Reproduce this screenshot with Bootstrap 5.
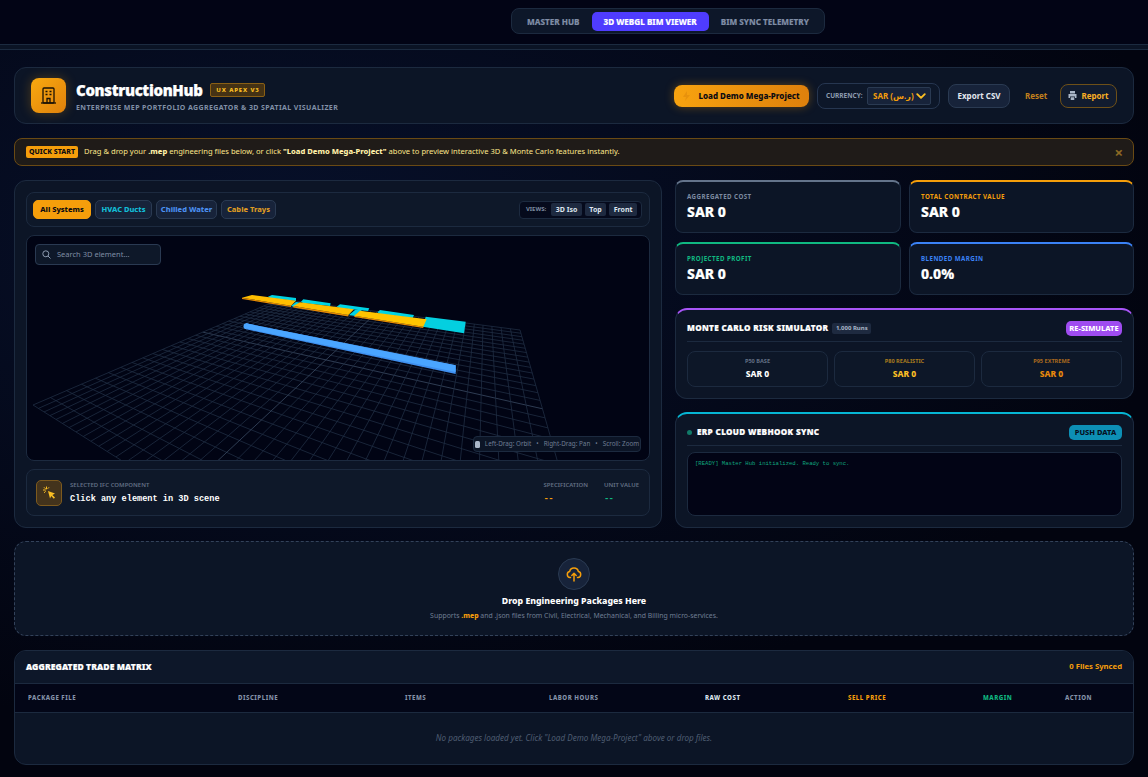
<!DOCTYPE html>
<html lang="en">

<head>
  <meta charset="UTF-8" />
  <meta name="viewport" content="width=device-width, initial-scale=1" />
  <title>ConstructionHub</title>
  <link href="https://cdn.jsdelivr.net/npm/bootstrap@5.3.2/dist/css/bootstrap.min.css" rel="stylesheet">
  <style>
    body {
      background: radial-gradient(ellipse 900px 500px at 25% 30%, #07102a 0%, rgba(7, 16, 42, 0) 100%), #02040f;
      color: #fff;
      font-family: "Noto Sans", "DejaVu Sans", sans-serif;
      font-size: 9px;
      min-height: 777px;
    }

    .mono-txt { font-family: "Liberation Mono", monospace; }

    .top-strip { height: 44px; background: #020415; padding-left: 188px; }
    .tab-shell { background: #0d1729; border: 1px solid #1c2a3f; border-radius: 8px; padding: 3px; height: 26px; gap: 0; }
    .tab-shell .nav-link { color: #7f8da5; font-size: 8.1px; font-weight: 800; padding: 0 12px; height: 19px; line-height: 19px; border-radius: 5px; white-space: nowrap; -webkit-text-stroke: .15px; }
    .tab-shell .nav-link.active { background: #4f3cff; color: #fff; }
    .strip-band { height: 6px; background: #0b1425; border-top: 1px solid #1c2b40; border-bottom: 1px solid #1c2b40; }

    .hub-page { padding: 17px 14px 12px; gap: 14px; }
    .hub-panel { background: #0c1526; border: 1px solid #1c2a3f; border-radius: 12px; color: #fff; }

    .hub-head { height: 57px; padding: 0 16px; flex-direction: row; align-items: center; }
    .logo-box { width: 35px; height: 35px; border-radius: 8px; background: linear-gradient(135deg, #f9a90f, #df810c); box-shadow: 0 0 12px rgba(245, 158, 11, .28); margin-right: 10px; }
    .brand-txt { padding-top: 2px; }
    .brand-name { font-size: 15px; font-weight: 900; letter-spacing: -.35px; line-height: 19px; -webkit-text-stroke: .25px #fff; }
    .brand-tag { background: #453214; border: 1px solid #8a5f14; color: #fbbf24; border-radius: 2px; font-size: 6px; font-weight: 800; letter-spacing: .85px; width: 55px; text-align: center; height: 14px; line-height: 12px; white-space: nowrap; margin-left: 4px; }
    .brand-sub { color: #8190a6; font-size: 7px; font-weight: 700; letter-spacing: .4px; margin-top: 3px; line-height: 10px; }

    .btn-demo { background: linear-gradient(90deg, #f8a30f, #de800c); color: #0a0a12; border: 0; border-radius: 8px; font-size: 8px; font-weight: 800; height: 22px; width: 135px; padding: 0; box-shadow: 0 0 10px rgba(245, 158, 11, .35); }
    .cur-box { border: 1px solid #263650; border-radius: 8px; height: 26px; width: 123px; padding: 0 8px; background: #0d1729; }
    .cur-box label { color: #8d9bb0; font-size: 6.5px; font-weight: 700; }
    .cur-box .form-select { width: 64px; height: 18px; min-height: 0; background-color: #17233a; border: 1px solid #2a3a52; border-radius: 2px; color: #f59e0b; font-size: 8px; font-weight: 700; padding: 0 0 0 5px; background-position: right 4px center; background-size: 10px 10px; background-image: url("data:image/svg+xml,%3csvg xmlns='http://www.w3.org/2000/svg' viewBox='0 0 16 16'%3e%3cpath fill='none' stroke='%23fbbf24' stroke-linecap='round' stroke-linejoin='round' stroke-width='3' d='m2 5 6 6 6-6'/%3e%3c/svg%3e"); }
    .btn-ghost { background: #17233a; border: 1px solid #2a3a52; border-radius: 8px; color: #e2e8f0; font-size: 8px; font-weight: 700; height: 24px; width: 62px; padding: 0; }
    .btn-reset { color: #c4801c; font-size: 8px; font-weight: 700; padding: 0; border: 0; width: 21px; white-space: nowrap; margin-left: 15px; }
    .btn-report { background: #121c2f; border: 1px solid #6e5018; border-radius: 8px; color: #fbb024; font-size: 8px; font-weight: 700; height: 24px; width: 57px; padding: 0; margin-left: 14px; }

    .hub-alert { background: #1f1b18; border: 1px solid #6a4a14; border-radius: 8px; height: 28px; padding: 0 10px 0 11px; margin: 0; color: #fde68a; font-size: 7.6px; }
    .qs-tag { background: #f59e0b; color: #0b0b12; border-radius: 2px; font-size: 7px; font-weight: 800; height: 12px; line-height: 12px; width: 52px; text-align: center; white-space: nowrap; margin-right: 6px; }
    .hub-alert b { font-weight: 800; color: #fff0a8; }
    .hub-alert .x-close { color: #8d6a24; font-size: 15px; font-weight: 700; line-height: 1; }

    .hub-main { display: grid; grid-template-columns: 648px 459px; gap: 13px; height: 347px; }
    .left-panel { padding: 11px; gap: 8px; }
    .inner-bar { background: #0e1829; border: 1px solid #1c2a3f; border-radius: 8px; }
    .tool-bar { height: 35px; padding: 0 7px 0 6px; }
    .flt-btn { height: 19px; background: #17233a; border: 1px solid #2a3a52; border-radius: 5px; font-size: 7.5px; font-weight: 800; padding: 0; text-align: center; }
    .flt-all { background: #f59e0b; border-color: #f59e0b; color: #0b0b12; width: 58px; }
    .flt-duct { color: #12bdd6; width: 57px; }
    .flt-water { color: #4b8ff0; width: 61px; }
    .flt-tray { color: #dd9a24; width: 55px; }
    .view-box { background: #050a1c; border: 1px solid #1c2a3f; border-radius: 4px; height: 18px; padding: 0 4px; gap: 3px; }
    .view-box span { color: #7c8aa0; font-size: 6px; font-weight: 700; margin: 0 2px; }
    .view-btn { background: #1e2a40; color: #dfe6f0; font-size: 7px; font-weight: 700; border: 0; border-radius: 2px; height: 13px; padding: 0 4.5px; line-height: 13px; }

    .scene-box { height: 226px; background: #010414; border: 1px solid #1c2a3f; border-radius: 8px; overflow: hidden; }
    #scene { position: absolute; inset: 0; width: 100%; height: 100%; }
    .scene-find { position: absolute; left: 8px; top: 8px; width: 126px; height: 21px; background: #0e1829; border: 1px solid #2a3a52; border-radius: 4px; color: #7f8da3; font-size: 7.5px; padding-left: 6px; gap: 6px; }
    .scene-hint { position: absolute; right: 8px; bottom: 8px; width: 168px; height: 16px; background: #0c1526; border: 1px solid #1c2a3f; border-radius: 4px; color: #6f7d93; font-size: 6.3px; gap: 5px; justify-content: center; white-space: nowrap; }

    .pick-bar { height: 47px; padding: 0 10px 0 9px; }
    .pick-icon { width: 26px; height: 26px; background: #43331c; border: 1px solid #7d5a1e; border-radius: 5px; }
    .tiny-lbl { color: #626f84; font-size: 6px; font-weight: 600; line-height: 9px; white-space: nowrap; }
    .pick-main { font-size: 8.6px; font-weight: 700; line-height: 12px; margin-top: 3px; }
    .pick-dash { font-size: 9px; font-weight: 700; line-height: 12px; margin-top: 3px; letter-spacing: -.8px; }

    .right-col { gap: 13px; }
    .stat-grid { display: grid; grid-template-columns: 226px 225px; gap: 9px 8px; }
    .stat-box { height: 53px; padding: 10px 11px 0; border-top-width: 2px; border-radius: 8px; }
    .stat-lbl { font-size: 6.2px; font-weight: 700; letter-spacing: .45px; line-height: 9px; white-space: nowrap; }
    .stat-val { font-size: 14px; font-weight: 800; line-height: 17px; margin-top: 2px; -webkit-text-stroke: .2px #fff; }
    .top-slate { border-top-color: #64748b; } .top-amber { border-top-color: #f59e0b; } .top-green { border-top-color: #10b981; } .top-blue { border-top-color: #3b82f6; } .top-violet { border-top-color: #a855f7; } .top-cyan { border-top-color: #06b6d4; }
    .c-slate { color: #7c8aa0; } .c-amber { color: #f59e0b; } .c-green { color: #10b981; } .c-blue { color: #3b82f6; }

    .sim-box { height: 91px; padding: 11px 11px 0; border-top-width: 2px; }
    .sim-head { height: 21px; border-bottom: 1px solid #1c2a3f; padding-bottom: 5px; }
    .sec-title { font-size: 8.1px; font-weight: 900; letter-spacing: .35px; white-space: nowrap; -webkit-text-stroke: .2px #fff; }
    .runs-tag { background: #1e2a40; color: #aab6c8; font-size: 6px; font-weight: 700; border-radius: 2px; height: 11px; line-height: 11px; width: 39px; text-align: center; margin-left: 4px; white-space: nowrap; }
    .btn-sim { background: #9f4cf0; color: #fff; border: 0; border-radius: 5px; font-size: 7.5px; font-weight: 800; width: 56px; height: 15px; padding: 0; line-height: 15px; white-space: nowrap; }
    .sim-cells { display: grid; grid-template-columns: repeat(3, 141px); gap: 6px; margin-top: 9px; }
    .sim-cell { height: 36px; background: #0d1728; border: 1px solid #1c2a3f; border-radius: 8px; padding-top: 5px; text-align: center; }
    .sim-cell .tiny-lbl { font-size: 5.6px; font-weight: 700; }
    .sim-cell div + div { font-size: 8.5px; font-weight: 800; line-height: 12px; margin-top: 2px; }

    .erp-box { padding: 11px 11px 0; border-top-width: 2px; flex-grow: 1; }
    .erp-dot { width: 5px; height: 5px; border-radius: 50%; background: #117a68; margin-right: 5px; }
    .btn-push { background: #0d8fb5; color: #06101f; border: 0; border-radius: 5px; font-size: 7.5px; font-weight: 800; width: 53px; height: 15px; padding: 0; line-height: 15px; white-space: nowrap; }
    .erp-log { height: 64px; margin-top: 6px; background: #020415; border: 1px solid #1c2a3f; border-radius: 8px; padding: 6px 7px; color: #10a67f; font-size: 5.6px; line-height: 9px; }

    .drop-zone { height: 95px; background: #0c1526; border: 1px dashed #33425a; border-radius: 12px; padding-top: 15px; text-align: center; }
    .drop-ring { width: 32px; height: 32px; border-radius: 50%; background: #17233a; border: 1px solid #2a3a52; }
    .drop-title { font-size: 8.75px; font-weight: 800; line-height: 12px; margin-top: 5px; }
    .drop-sub { color: #6f7d93; font-size: 6.9px; line-height: 10px; margin-top: 4px; }
    .drop-sub b { color: #f59e0b; font-weight: 800; }

    .trade-box { height: 115px; overflow: hidden; }
    .trade-head { height: 33px; flex-shrink: 0; padding: 0 11px; border-bottom: 1px solid #1c2a3f; background: #0d1729; }
    .trade-head strong { font-size: 8.5px; font-weight: 900; letter-spacing: .1px; -webkit-text-stroke: .2px #fff; }
    .trade-head span { color: #f59e0b; font-size: 7.7px; font-weight: 700; }
    .trade-tbl { table-layout: fixed; margin: 0; --bs-table-bg: transparent; --bs-table-color: #fff; }
    .trade-tbl th { height: 28px; background: #030617; border-bottom: 1px solid #1c2a3f; color: #8592a8; font-size: 6.1px; font-weight: 800; letter-spacing: .5px; padding: 0 13px; vertical-align: middle; white-space: nowrap; }
    .trade-tbl th.th-raw { color: #dfe6f0; } .trade-tbl th.th-sell { color: #f59e0b; } .trade-tbl th.th-margin { color: #10b981; }
    .trade-tbl td { height: 52px; border: 0; color: #4f5d72; font-size: 8.1px; font-style: italic; text-align: center; vertical-align: middle; padding: 0; }
  </style>
</head>

<body>
  <div class="top-strip d-flex justify-content-center align-items-start pt-2">
    <ul class="nav tab-shell align-items-center flex-nowrap">
      <li class="nav-item"><a class="nav-link" href="#">MASTER HUB</a></li>
      <li class="nav-item"><a class="nav-link active" href="#">3D WEBGL BIM VIEWER</a></li>
      <li class="nav-item"><a class="nav-link" href="#">BIM SYNC TELEMETRY</a></li>
    </ul>
  </div>
  <div class="strip-band"></div>

  <main class="hub-page d-flex flex-column">
    <!-- header -->
    <div class="card hub-panel hub-head">
      <div class="logo-box d-flex align-items-center justify-content-center flex-shrink-0">
        <svg width="15" height="17" viewBox="0 0 15 17" fill="none" stroke="#1a1206" stroke-width="1.3">
          <rect x="2" y="1" width="11" height="15" rx="1" />
          <path d="M0 16h15" />
          <path d="M4.5 4.5h2M8.5 4.5h2M4.5 7.5h2M8.5 7.5h2" stroke-width="1.6" />
          <path d="M6 16v-4.5h3V16" />
        </svg>
      </div>
      <div class="brand-txt">
        <div class="d-flex align-items-center gap-1">
          <span class="brand-name">ConstructionHub</span>
          <span class="brand-tag">UX APEX V3</span>
        </div>
        <div class="brand-sub">ENTERPRISE MEP PORTFOLIO AGGREGATOR &amp; 3D SPATIAL VISUALIZER</div>
      </div>
      <div class="ms-auto d-flex align-items-center">
        <button class="btn btn-demo d-flex align-items-center justify-content-center gap-2" type="button">
          <svg width="7" height="10" viewBox="0 0 7 10"><path d="M4 0 0 6h3L2 10l5-6H4z" fill="#e8920c" /></svg>
          Load Demo Mega-Project
        </button>
        <div class="cur-box d-flex align-items-center justify-content-between ms-2">
          <label for="cur">CURRENCY:</label>
          <select id="cur" class="form-select"><option>SAR (ر.س)</option></select>
        </div>
        <button class="btn btn-ghost ms-2" type="button">Export CSV</button>
        <button class="btn btn-reset" type="button">Reset</button>
        <button class="btn btn-report d-flex align-items-center justify-content-center gap-1" type="button">
          <svg width="9" height="9" viewBox="0 0 9 9" fill="#aab6c8"><path d="M2 0h5v2.5H2zM0.5 3h8v4H7V5.5H2V7H.5zM2.7 6.2h3.6V9H2.7z" /></svg>
          Report
        </button>
      </div>
    </div>

    <!-- quick start -->
    <div class="alert hub-alert d-flex align-items-center" role="alert">
      <span class="qs-tag flex-shrink-0">QUICK START</span>
      <span>Drag &amp; drop your <b>.mep</b> engineering files below, or click <b>"Load Demo Mega-Project"</b> above to preview interactive 3D &amp; Monte Carlo features instantly.</span>
      <span class="x-close ms-auto">&times;</span>
    </div>

    <div class="hub-main">
      <!-- viewer -->
      <section class="card hub-panel left-panel">
        <div class="inner-bar tool-bar d-flex align-items-center">
          <div class="d-flex gap-1">
            <button class="btn flt-btn flt-all" type="button">All Systems</button>
            <button class="btn flt-btn flt-duct" type="button">HVAC Ducts</button>
            <button class="btn flt-btn flt-water" type="button">Chilled Water</button>
            <button class="btn flt-btn flt-tray" type="button">Cable Trays</button>
          </div>
          <div class="view-box d-flex align-items-center ms-auto">
            <span>VIEWS:</span>
            <button class="view-btn" type="button">3D Iso</button>
            <button class="view-btn" type="button">Top</button>
            <button class="view-btn" type="button">Front</button>
          </div>
        </div>

        <div class="scene-box position-relative">
          <!-- drawn in page coords, viewBox starts at the box's inner corner -->
          <svg id="scene" viewBox="27 236 622 224" preserveAspectRatio="none">
            <g id="gridLines" fill="none"></g>
            <!-- cyan ducts, behind the trays -->
            <g fill="#00d4e4">
              <polygon points="268,296.7 272,295 296,298 296,301 270,298" />
              <polygon points="301,301.7 303.3,299.3 330.7,303.3 330,306 303,303" />
              <polygon points="336.7,306.7 340,304.3 369.3,308.3 368,311 339,308" />
              <polygon points="349,315 355,310 362,310 355,316" />
              <polygon points="377.3,312.3 380,310 414,315 412.7,318 380,314" />
              <polygon points="291,306 296,302 300,302.4 294,307" />
              <polygon points="425.7,316.7 465.7,321.7 464,333.3 422.7,326.7" fill="#04cfe0" />
            </g>
            <!-- orange cable trays -->
            <g>
              <polygon points="242,297.7 291,305.7 291,307 242,299" fill="#e98a00" />
              <polygon points="242,297.7 252,295 296,300.7 291,305.7" fill="#ffbe00" />
              <polygon points="293.3,306 348.3,315 348.3,316.5 293.3,307.5" fill="#e98a00" />
              <polygon points="293.3,306 300,302.3 354,309.3 348.3,315" fill="#ffbe00" />
              <polygon points="354.3,315.7 423.3,326.7 423.3,328 354.3,317" fill="#e98a00" />
              <polygon points="354.3,315.7 360,310.7 426.7,319.3 423.3,326.7" fill="#ffc400" />
            </g>
            <!-- chilled water pipe -->
            <circle cx="246.5" cy="326.3" r="3" fill="#4aa5ff" />
            <polygon points="246,323.3 455.7,365.3 455.7,374 246,329.3" fill="#3f8fee" />
            <polygon points="246,323.3 455.7,365.3 455.7,372 246,328.5" fill="#4aa5ff" />
          </svg>

          <div class="scene-find d-flex align-items-center">
            <svg width="9" height="9" viewBox="0 0 9 9" fill="none" stroke="#8d9bb0" stroke-width="1"><circle cx="3.8" cy="3.8" r="3" /><path d="m6 6 2.5 2.5" /></svg>
            Search 3D element...
          </div>
          <div class="scene-hint d-flex align-items-center">
            <svg width="5" height="7" viewBox="0 0 5 7"><rect width="5" height="7" rx="1.5" fill="#aab6c8" /></svg>
            <span>Left-Drag: Orbit</span><span>&bull;</span><span>Right-Drag: Pan</span><span>&bull;</span><span>Scroll: Zoom</span>
          </div>
        </div>

        <div class="inner-bar pick-bar d-flex align-items-center">
          <div class="pick-icon d-flex align-items-center justify-content-center flex-shrink-0">
            <svg width="13" height="13" viewBox="0 0 13 13" fill="#fbbf24">
              <path d="M5 5l7 2.6-2.6 1.3L12 11.5 10.8 12.7 8.3 10 7 12.5z" />
              <path d="M3.5 0.5v2.8M0 4h2.8M1 1.3l1.6 1.6M6 1.3 4.6 2.8M1 6.8l1.7-1.5" stroke="#fbbf24" stroke-width="1" fill="none" />
            </svg>
          </div>
          <div class="ms-2">
            <div class="tiny-lbl">SELECTED IFC COMPONENT</div>
            <div class="pick-main mono-txt">Click any element in 3D scene</div>
          </div>
          <div class="ms-auto d-flex" style="gap:16px">
            <div>
              <div class="tiny-lbl">SPECIFICATION</div>
              <div class="pick-dash c-amber mono-txt">--</div>
            </div>
            <div>
              <div class="tiny-lbl">UNIT VALUE</div>
              <div class="pick-dash c-green mono-txt">--</div>
            </div>
          </div>
        </div>
      </section>

      <!-- right column -->
      <div class="right-col d-flex flex-column">
        <div class="stat-grid">
          <div class="card hub-panel stat-box top-slate">
            <div class="stat-lbl c-slate">AGGREGATED COST</div>
            <div class="stat-val">SAR 0</div>
          </div>
          <div class="card hub-panel stat-box top-amber">
            <div class="stat-lbl c-amber">TOTAL CONTRACT VALUE</div>
            <div class="stat-val">SAR 0</div>
          </div>
          <div class="card hub-panel stat-box top-green">
            <div class="stat-lbl c-green">PROJECTED PROFIT</div>
            <div class="stat-val">SAR 0</div>
          </div>
          <div class="card hub-panel stat-box top-blue">
            <div class="stat-lbl c-blue">BLENDED MARGIN</div>
            <div class="stat-val">0.0%</div>
          </div>
        </div>

        <div class="card hub-panel sim-box top-violet">
          <div class="sim-head d-flex align-items-center">
            <span class="sec-title">MONTE CARLO RISK SIMULATOR</span>
            <span class="runs-tag">1,000 Runs</span>
            <button class="btn btn-sim ms-auto" type="button">RE-SIMULATE</button>
          </div>
          <div class="sim-cells">
            <div class="sim-cell"><div class="tiny-lbl">P50 BASE</div><div>SAR 0</div></div>
            <div class="sim-cell"><div class="tiny-lbl" style="color:#a87a1e">P80 REALISTIC</div><div style="color:#fbbf24">SAR 0</div></div>
            <div class="sim-cell"><div class="tiny-lbl" style="color:#a8691e">P95 EXTREME</div><div style="color:#e8890c">SAR 0</div></div>
          </div>
        </div>

        <div class="card hub-panel erp-box top-cyan">
          <div class="sim-head d-flex align-items-center">
            <span class="erp-dot"></span>
            <span class="sec-title">ERP CLOUD WEBHOOK SYNC</span>
            <button class="btn btn-push ms-auto" type="button">PUSH DATA</button>
          </div>
          <div class="erp-log mono-txt">[READY] Master Hub initialized. Ready to sync.</div>
        </div>
      </div>
    </div>

    <!-- dropzone -->
    <div class="drop-zone">
      <div class="drop-ring d-flex align-items-center justify-content-center mx-auto" style="margin-top:1px">
        <svg width="16" height="16" viewBox="0 0 16 16" fill="none" stroke="#f59e0b" stroke-width="1.5" stroke-linecap="round" stroke-linejoin="round">
          <path d="M4.5 11.5H4a3 3 0 0 1-.4-5.9 4.5 4.5 0 0 1 8.8 0 3 3 0 0 1-.4 5.9h-.5" />
          <path d="M8 15V7.5M5.8 9.5 8 7.3l2.2 2.2" />
        </svg>
      </div>
      <div class="drop-title">Drop Engineering Packages Here</div>
      <div class="drop-sub">Supports <b>.mep</b> and .json files from Civil, Electrical, Mechanical, and Billing micro-services.</div>
    </div>

    <!-- table -->
    <div class="card hub-panel trade-box">
      <div class="trade-head d-flex align-items-center justify-content-between">
        <strong>AGGREGATED TRADE MATRIX</strong>
        <span>0 Files Synced</span>
      </div>
      <table class="table trade-tbl">
        <colgroup>
          <col width="210"><col width="167"><col width="144"><col width="156"><col width="143"><col width="135"><col width="82"><col width="81">
        </colgroup>
        <thead>
          <tr>
            <th>PACKAGE FILE</th>
            <th>DISCIPLINE</th>
            <th>ITEMS</th>
            <th>LABOR HOURS</th>
            <th class="th-raw">RAW COST</th>
            <th class="th-sell">SELL PRICE</th>
            <th class="th-margin">MARGIN</th>
            <th>ACTION</th>
          </tr>
        </thead>
        <tbody>
          <tr>
            <td colspan="8">No packages loaded yet. Click "Load Demo Mega-Project" above or drop files.</td>
          </tr>
        </tbody>
      </table>
    </div>
  </main>

  <script src="https://cdn.jsdelivr.net/npm/bootstrap@5.3.2/dist/js/bootstrap.bundle.min.js"></script>
  <script>
    // floor grid: map a unit square on to the four corners seen on screen
    const corners = [[33, 405], [280, 299], [520, 330], [652, 793]];

    function squareToQuad(q) {
      const [[x0, y0], [x1, y1], [x2, y2], [x3, y3]] = q;
      const dx1 = x1 - x2, dx2 = x3 - x2, sx = x0 - x1 + x2 - x3;
      const dy1 = y1 - y2, dy2 = y3 - y2, sy = y0 - y1 + y2 - y3;
      const den = dx1 * dy2 - dx2 * dy1;
      const g = (sx * dy2 - dx2 * sy) / den;
      const h = (dx1 * sy - sx * dy1) / den;
      return (u, v) => {
        const w = g * u + h * v + 1;
        return [
          ((x1 - x0 + g * x1) * u + (x3 - x0 + h * x3) * v + x0) / w,
          ((y1 - y0 + g * y1) * u + (y3 - y0 + h * y3) * v + y0) / w
        ];
      };
    }

    const map = squareToQuad(corners);
    const NU = 30, NV = 36;
    let lines = "";
    const addLine = (a, b, bright) => {
      lines += `<line x1="${a[0]}" y1="${a[1]}" x2="${b[0]}" y2="${b[1]}" stroke="${bright ? "#3a4a62" : "#1f2d42"}" stroke-width=".8"/>`;
    };
    for (let i = 0; i <= NU; i++) addLine(map(i / NU, 0), map(i / NU, 1), i === NU / 2);
    for (let j = 0; j <= NV; j++) addLine(map(0, j / NV), map(1, j / NV), j === NV / 2);
    document.getElementById("gridLines").innerHTML = lines;
  </script>
</body>

</html>
